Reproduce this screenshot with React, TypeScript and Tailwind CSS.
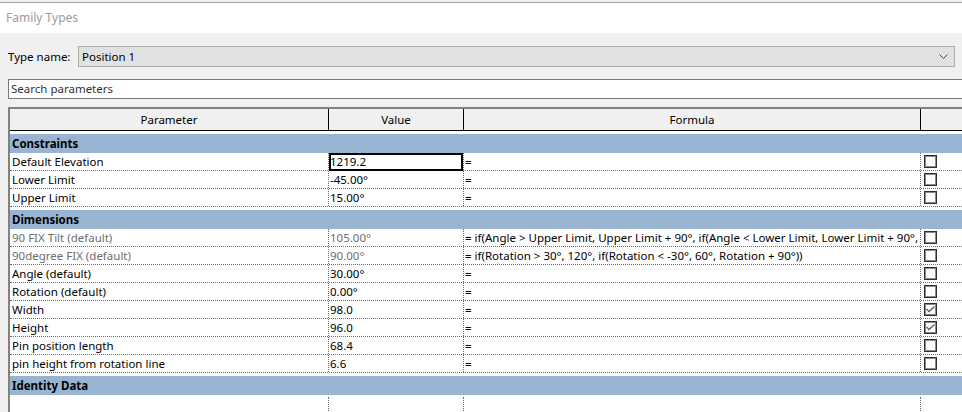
import React from "react";

type Row = {
  name: string;
  value: string;
  formula?: string;
  gray?: boolean;
  checked?: boolean;
  selected?: boolean;
};

const constraints: Row[] = [
  { name: "Default Elevation", value: "1219.2", selected: true },
  { name: "Lower Limit", value: "-45.00°" },
  { name: "Upper Limit", value: "15.00°" },
];

const dimensions: Row[] = [
  {
    name: "90 FIX Tilt (default)",
    value: "105.00°",
    gray: true,
    formula:
      " if(Angle > Upper Limit, Upper Limit + 90°, if(Angle < Lower Limit, Lower Limit + 90°,",
  },
  {
    name: "90degree FIX (default)",
    value: "90.00°",
    gray: true,
    formula: " if(Rotation > 30°, 120°, if(Rotation < -30°, 60°, Rotation + 90°))",
  },
  { name: "Angle (default)", value: "30.00°" },
  { name: "Rotation (default)", value: "0.00°" },
  { name: "Width", value: "98.0", checked: true },
  { name: "Height", value: "96.0", checked: true },
  { name: "Pin position length", value: "68.4" },
  { name: "pin height from rotation line", value: "6.6" },
];

function CheckBox({ checked }: { checked?: boolean }) {
  return (
    <div className="w-[13px] h-[13px] border border-[#2e2e2e] shadow-[inset_0_0_0_1px_#8a8a8a] bg-white relative">
      {checked && (
        <svg
          width="11"
          height="11"
          viewBox="0 0 11 11"
          className="absolute left-0 top-0"
        >
          <polyline
            points="1.5,5 4,7.5 9.5,2.5"
            fill="none"
            stroke="#5a5a5a"
            strokeWidth="1.3"
          />
        </svg>
      )}
    </div>
  );
}

function GroupRow({ title }: { title: string }) {
  return (
    <div className="pt-[3px] bg-white">
      <div className="h-[19px] bg-[#99b4d1] flex items-center pl-[2px] font-bold">
        {title}
      </div>
    </div>
  );
}

function DataRow({ row }: { row: Row }) {
  const dim = row.gray ? "text-[#6d6d6d]" : "text-black";
  return (
    <div className="h-[18px] flex bg-white border-b border-dotted border-[#6e6e6e]">
      <div
        className={`w-[319px] shrink-0 border-r border-dotted border-[#6e6e6e] pl-[2px] flex items-center whitespace-nowrap overflow-hidden ${dim}`}
      >
        {row.name}
      </div>
      <div
        className={`w-[135px] shrink-0 border-r border-dotted border-[#6e6e6e] pl-px flex items-center relative ${dim}`}
      >
        {row.value}
        {row.selected && (
          <div className="absolute left-0 top-0 right-0 -bottom-px border-2 border-black" />
        )}
      </div>
      <div className="w-[457px] shrink-0 border-r border-dotted border-[#6e6e6e] pl-px flex items-center whitespace-nowrap overflow-hidden text-black">
        ={row.formula ?? ""}
      </div>
      <div className="flex-1 pl-[3px] pt-[2px]">
        <CheckBox checked={row.checked} />
      </div>
    </div>
  );
}

export default function App() {
  return (
    <div className="w-[962px] h-[412px] overflow-hidden bg-[#f0f0f0] text-[11.5px] leading-none text-black font-['Noto_Sans',sans-serif]">
      <div className="h-[2px] bg-[#f0f0f0]" />
      <div className="h-px bg-[#a0a0a0]" />
      <div className="h-[30px] bg-white flex items-center pl-[6px] text-[#9a9a9a] text-[12px]">
        Family Types
      </div>

      <div className="flex items-center pt-[13px]">
        <div className="w-[78px] pl-[8px] shrink-0">Type name:</div>
        <div className="w-[877px] h-[21px] border border-[#adadad] bg-[#e1e1e1] flex items-center pl-[3px] pr-[6px] justify-between">
          <span>Position 1</span>
          <svg width="9" height="6" viewBox="0 0 9 6">
            <polyline
              points="0.5,0.5 4.5,4.5 8.5,0.5"
              fill="none"
              stroke="#444444"
              strokeWidth="1"
            />
          </svg>
        </div>
      </div>

      <div className="mt-[12px] ml-[8px] w-[970px] h-[20px] border border-[#7a7a7a] bg-white flex items-center pl-[2px] text-[#333333]">
        Search parameters
      </div>

      <div className="mt-[8px] ml-[8px] w-[1000px] h-[400px] border-t-2 border-l-2 border-[#828282] bg-white">
        <div className="h-[22px] flex bg-[#f0f0f0] border-b border-black">
          <div className="w-[319px] shrink-0 border-r border-black flex items-center justify-center">
            Parameter
          </div>
          <div className="w-[135px] shrink-0 border-r border-black flex items-center justify-center">
            Value
          </div>
          <div className="w-[457px] shrink-0 border-r border-black flex items-center justify-center">
            Formula
          </div>
          <div className="flex-1" />
        </div>

        <GroupRow title="Constraints" />
        {constraints.map((r) => (
          <DataRow key={r.name} row={r} />
        ))}
        <GroupRow title="Dimensions" />
        {dimensions.map((r) => (
          <DataRow key={r.name} row={r} />
        ))}
        <GroupRow title="Identity Data" />
        <div className="h-[40px] flex bg-white pt-[2px]">
          <div className="w-[319px] shrink-0 border-r border-dotted border-[#6e6e6e]" />
          <div className="w-[135px] shrink-0 border-r border-dotted border-[#6e6e6e]" />
          <div className="w-[457px] shrink-0 border-r border-dotted border-[#6e6e6e]" />
          <div className="flex-1" />
        </div>
      </div>
    </div>
  );
}
